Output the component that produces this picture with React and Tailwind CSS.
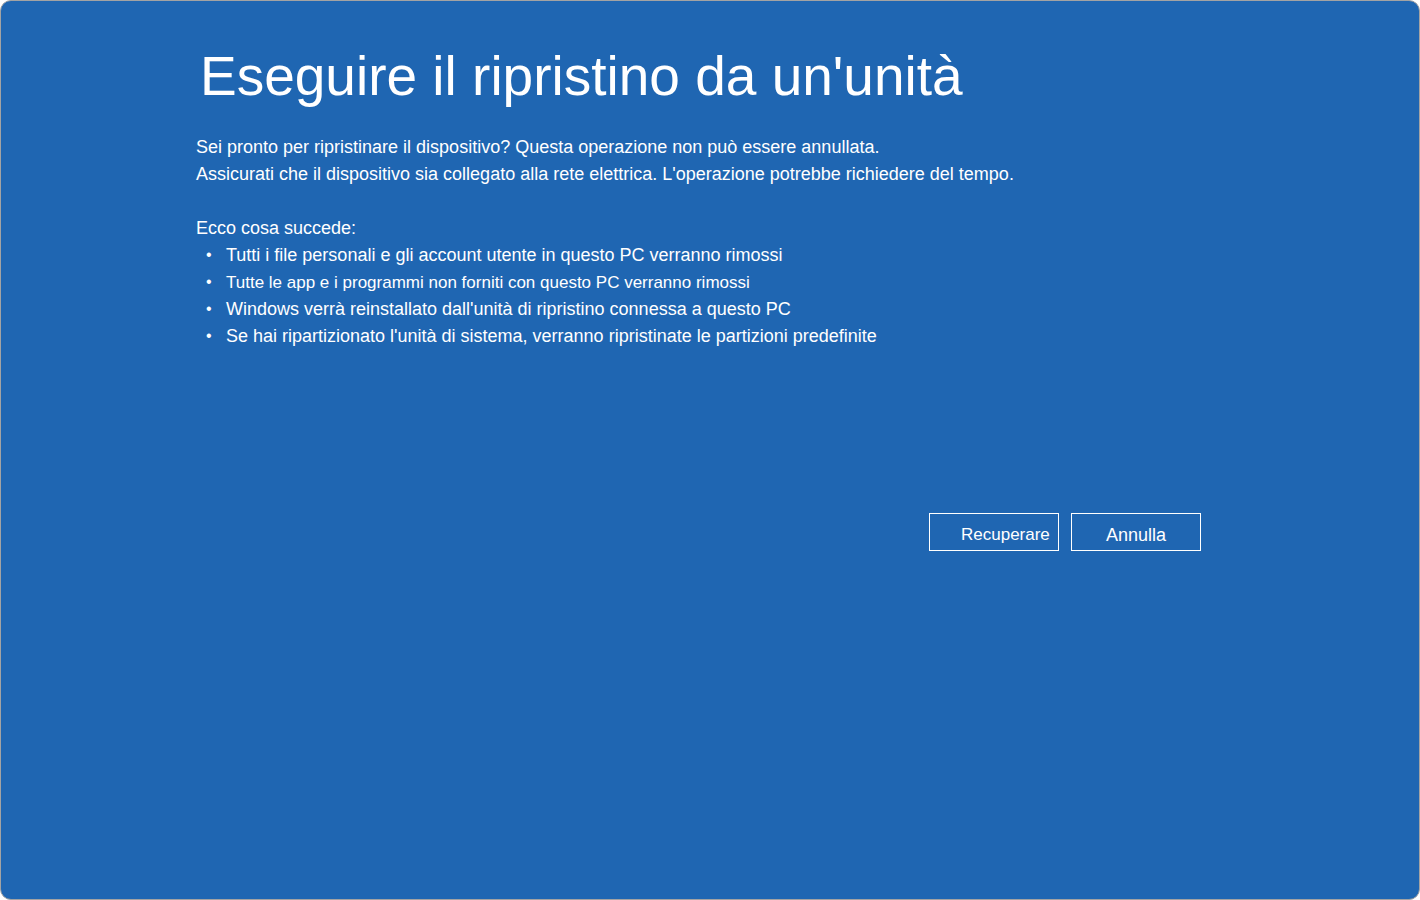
export default function App() {
  const items = [
    { text: "Tutti i file personali e gli account utente in questo PC verranno rimossi", size: "text-[18px]" },
    { text: "Tutte le app e i programmi non forniti con questo PC verranno rimossi", size: "text-[17px]" },
    { text: "Windows verrà reinstallato dall'unità di ripristino connessa a questo PC", size: "text-[18px]" },
    { text: "Se hai ripartizionato l'unità di sistema, verranno ripristinate le partizioni predefinite", size: "text-[18px]" },
  ];

  return (
    <div className="h-[900px] w-[1420px] bg-white" style={{ fontFamily: '"Liberation Sans", Arial, sans-serif' }}>
      <div className="h-full w-full rounded-[11px] border border-[#a3a3a3] bg-[#1f66b2] text-white">
        <div className="ml-[195px] w-[1005px] pt-[48px]">
          <h1 className="text-[55px] leading-none font-normal pl-[4px]">Eseguire il ripristino da un'unità</h1>

          <div className="mt-[30px] text-[18px] leading-[27px]">
            <p>Sei pronto per ripristinare il dispositivo? Questa operazione non può essere annullata.</p>
            <p>Assicurati che il dispositivo sia collegato alla rete elettrica. L'operazione potrebbe richiedere del tempo.</p>
            <p className="mt-[27px]">Ecco cosa succede:</p>
            <ul>
              {items.map((it) => (
                <li key={it.text} className="flex items-center h-[27px]">
                  <span className="w-[30px] pl-[10px] pb-[3px] text-[16px]">•</span>
                  <span className={it.size}>{it.text}</span>
                </li>
              ))}
            </ul>
          </div>

          <div className="mt-[163px] flex justify-end gap-[12px]">
            <button className="h-[38px] w-[130px] border border-white pl-[31px] pt-[6px] text-left text-[17px]">
              Recuperare
            </button>
            <button className="h-[38px] w-[130px] border border-white pt-[6px] text-center text-[18px]">
              Annulla
            </button>
          </div>
        </div>
      </div>
    </div>
  );
}
